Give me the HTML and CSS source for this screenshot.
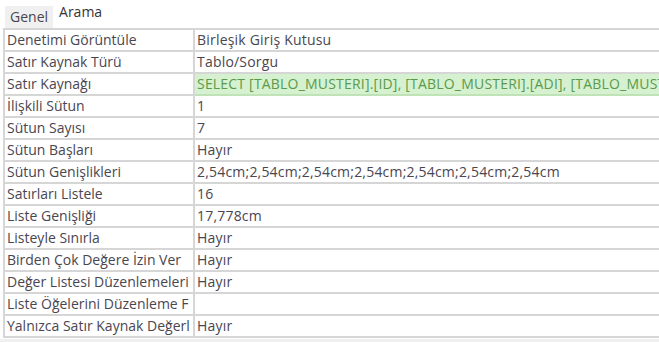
FILE: index.html
```html
<!DOCTYPE html>
<html lang="tr">
<head>
  <meta charset="UTF-8">
  <title>Özellik Sayfası</title>
  <link rel="stylesheet" href="styles.css">
</head>
<body>
  <!-- Sekmeler -->
  <div class="tabs">
    <div class="tab">Genel</div>
    <div class="tab active">Arama</div>
  </div>

  <!-- Özellikler -->
  <div class="sheet">
    <table class="props">
      <colgroup>
        <col class="c-name">
        <col class="c-value">
      </colgroup>
      <tr><td>Denetimi Görüntüle</td><td>Birleşik Giriş Kutusu</td></tr>
      <tr><td>Satır Kaynak Türü</td><td>Tablo/Sorgu</td></tr>
      <tr class="selected"><td>Satır Kaynağı</td><td>SELECT [TABLO_MUSTERI].[ID], [TABLO_MUSTERI].[ADI], [TABLO_MUSTERI].[SOYADI]</td></tr>
      <tr><td>İlişkili Sütun</td><td>1</td></tr>
      <tr><td>Sütun Sayısı</td><td>7</td></tr>
      <tr><td>Sütun Başları</td><td>Hayır</td></tr>
      <tr><td>Sütun Genişlikleri</td><td>2,54cm;2,54cm;2,54cm;2,54cm;2,54cm;2,54cm;2,54cm</td></tr>
      <tr><td>Satırları Listele</td><td>16</td></tr>
      <tr><td>Liste Genişliği</td><td>17,778cm</td></tr>
      <tr><td>Listeyle Sınırla</td><td>Hayır</td></tr>
      <tr><td>Birden Çok Değere İzin Ver</td><td>Hayır</td></tr>
      <tr><td>Değer Listesi Düzenlemeleri</td><td>Hayır</td></tr>
      <tr><td>Liste Öğelerini Düzenleme F</td><td></td></tr>
      <tr><td>Yalnızca Satır Kaynak Değerl</td><td>Hayır</td></tr>
    </table>
  </div>
  <div class="footer"></div>
</body>
</html>
```

FILE: styles.css
```css
body {
  margin: 0;
  background: #fff;
  font-family: "Open Sans", "Noto Sans", sans-serif;
  font-size: 14px;
  color: #4a4650;
  width: 659px;
  height: 342px;
  overflow: hidden;
}
.tabs {
  display: flex;
  height: 28px;
  padding-left: 5px;
  align-items: flex-end;
}
.tab {
  height: 22px;
  line-height: 22px;
  padding: 0 5px;
  background: #f0f0f0;
  color: #4a4650;
}
.tab.active {
  background: #fff;
  height: 28px;
  line-height: 24px;
  padding: 0 6px;
  color: #333;
}
.sheet {
  padding-left: 3px;
  overflow: hidden;
}
.props {
  border-collapse: collapse;
  table-layout: fixed;
  width: 760px;
}
.c-name {
  width: 190px;
}
.props td {
  height: 20px;
  padding: 0 2px;
  border: 2px solid #d6d6d6;
  white-space: nowrap;
  overflow: hidden;
  line-height: 20px;
}
.props td + td {
  letter-spacing: 0.2px;
}
.props tr.selected td:last-child {
  background: #d6f1cf;
  color: #5a9a4c;
  border-color: #bfe3b6;
}
.footer {
  height: 6px;
  margin-top: 1px;
  background: #f0f0f0;
}
```
